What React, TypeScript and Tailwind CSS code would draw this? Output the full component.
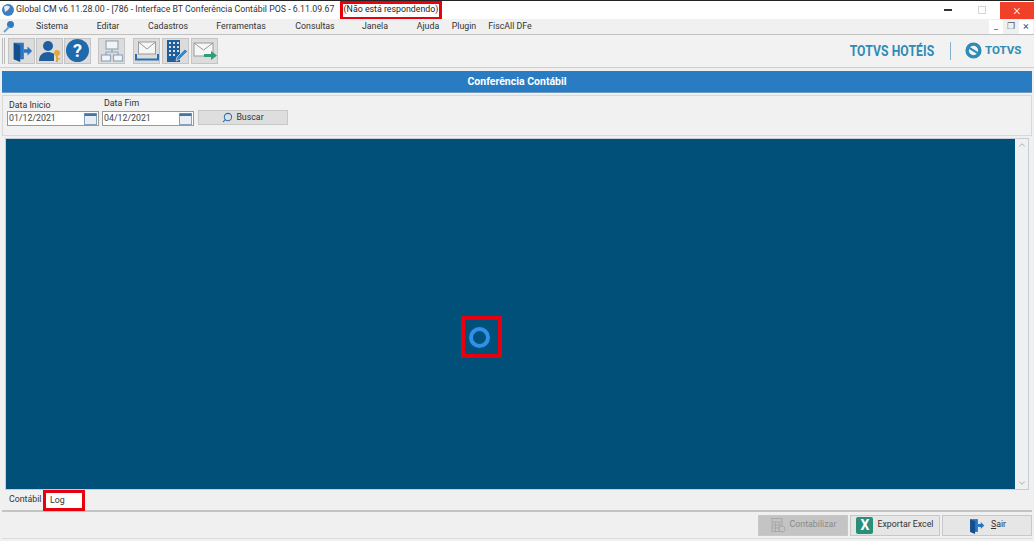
import { ChevronDown, ChevronUp, Search } from "lucide-react";
import type { ReactNode } from "react";

const font = "font-['Roboto','Open_Sans',sans-serif]";

const menus = [
  { label: "Sistema", width: "w-[60px]" },
  { label: "Editar", width: "w-[52px]" },
  { label: "Cadastros", width: "w-[68px]" },
  { label: "Ferramentas", width: "w-[78px]" },
  { label: "Consultas", width: "w-[70px]" },
  { label: "Janela", width: "w-[50px]" },
  { label: "Ajuda", width: "ml-[8px] w-[40px]" },
  { label: "Plugin", width: "w-[32px]" },
  { label: "FiscAll DFe", width: "w-[60px]" },
];

const ToolButton = ({ children, className = "" }: { children: ReactNode; className?: string }) => (
  <div className={`flex h-[26px] w-[27px] items-center justify-center border border-[#c4c4c4] bg-[#dcdcdc] ${className}`}>
    {children}
  </div>
);

const DoorIcon = ({ size = 22 }: { size?: number }) => (
  <svg width={size} height={size} viewBox="0 0 24 24">
    <path d="M3 3h11v18H3z" fill="#2a76c0" />
    <path d="M3 3l7 3v18l-7-3z" fill="#16508c" />
    <path d="M14 10h4V7l5 5-5 5v-3h-4z" fill="#2a76c0" />
  </svg>
);

const UserKeyIcon = () => (
  <svg width="24" height="24" viewBox="0 0 24 24">
    <circle cx="10" cy="7" r="5" fill="#1f5f9e" />
    <path d="M1 22c0-6 4-9 9-9 3 0 5 1 6 2v7z" fill="#1f5f9e" />
    <circle cx="19" cy="14" r="3" fill="#e3a83a" />
    <path d="M18 16h2v7h-2z" fill="#e3a83a" />
    <path d="M20 19h2v1.500h-2z" fill="#e3a83a" />
  </svg>
);

const HelpIcon = () => (
  <div className="flex h-[23px] w-[23px] items-center justify-center rounded-full bg-[#1f6aad] text-[18px] font-bold leading-none text-white">
    ?
  </div>
);

const NetworkIcon = () => (
  <svg width="24" height="24" viewBox="0 0 24 24" fill="#f4f4f4" stroke="#8fa8bf" strokeWidth="1.200">
    <rect x="6" y="2" width="12" height="8" />
    <rect x="1.500" y="16" width="9" height="6" />
    <rect x="13.500" y="16" width="9" height="6" />
    <path d="M12 10v3M6 16v-3h12v3" fill="none" />
  </svg>
);

const InboxIcon = () => (
  <svg width="24" height="24" viewBox="0 0 24 24">
    <rect x="3.500" y="3" width="17" height="12" fill="#f6f6f6" stroke="#9a9a9a" />
    <path d="M3.500 3l8.500 7 8.500-7" fill="none" stroke="#9a9a9a" />
    <path d="M1 15v5.500h22V15" fill="none" stroke="#2a6fb0" strokeWidth="2" />
  </svg>
);

const BuildingIcon = () => (
  <svg width="24" height="24" viewBox="0 0 24 24">
    <rect x="3" y="1" width="13" height="22" fill="#1f5f9e" />
    <path
      d="M5 3h2v2H5zM9 3h2v2H9zM13 3h2v2h-2zM5 7h2v2H5zM9 7h2v2H9zM13 7h2v2h-2zM5 11h2v2H5zM9 11h2v2H9zM13 11h2v2h-2zM5 15h2v2H5zM9 15h2v2H9z"
      fill="#dcdcdc"
    />
    <path d="M12 22l1-4 8-8 2.500 2.500-8 8z" fill="#3b86c6" stroke="#dcdcdc" strokeWidth="0.800" />
  </svg>
);

const MailArrowIcon = () => (
  <svg width="24" height="24" viewBox="0 0 24 24">
    <rect x="1" y="4" width="19" height="13" fill="#f6f6f6" stroke="#9a9a9a" />
    <path d="M1 4l9.500 7L20 4" fill="none" stroke="#9a9a9a" />
    <path d="M11 15h7v-3l6 4.500-6 4.500v-3h-7z" fill="#2f9b7a" />
  </svg>
);

const CalendarIcon = () => (
  <svg width="13" height="12" viewBox="0 0 13 12">
    <rect x="0.500" y="0.500" width="12" height="11" fill="#e8eef4" stroke="#8aa2b8" />
    <rect x="0.500" y="0.500" width="12" height="2.500" fill="#3f78a8" />
  </svg>
);

const DateField = ({ label, value, labelClass }: { label: string; value: string; labelClass: string }) => (
  <div className="flex flex-col">
    <span className={`text-[8.800px] leading-[11px] text-[#333] ${labelClass}`}>{label}</span>
    <div className="flex h-[15px] w-[92px] items-center justify-between border border-[#9a9a9a] bg-white pl-[1px] pr-[1px]">
      <span className="text-[8.800px] text-[#444]">{value}</span>
      <CalendarIcon />
    </div>
  </div>
);

const FooterButton = ({ children, disabled = false }: { children: ReactNode; disabled?: boolean }) => (
  <div
    className={`flex h-[21px] w-[90px] items-center justify-center gap-[4px] border border-[#c8c8c8] text-[8.800px] ${
      disabled ? "bg-[#c4c4c4] text-[#8a8a8a]" : "bg-[#e6e6e6] text-[#333]"
    }`}
  >
    {children}
  </div>
);

export default function App() {
  return (
    <div className={`flex h-[541px] w-[1034px] flex-col overflow-hidden bg-[#f0f0f0] ${font}`}>
      <div className="flex h-[19px] shrink-0 items-center border-t border-[#222] bg-white pl-[1px]">
        <svg width="14" height="14" viewBox="0 0 14 14" className="shrink-0">
          <circle cx="7" cy="7" r="6" fill="#3f7fc0" />
          <path d="M3 4c2-2 5-1 6 0L7 7 4 9z" fill="#e6eef6" />
        </svg>
        <span className="ml-[1px] w-[321px] shrink-0 whitespace-nowrap text-[8.800px] text-[#333]">
          Global CM v6.11.28.00 - [786 - Interface BT Conferência Contábil POS - 6.11.09.67
        </span>
        <div className="ml-[3px] flex h-[19px] w-[102px] shrink-0 items-center justify-center whitespace-nowrap border-[3px] border-[#e8000d] bg-white text-[8.800px] text-[#222]">
          (Não está respondendo)
        </div>
        <div className="ml-auto flex h-full items-center">
          <div className="mr-[26px] h-[1.500px] w-[8px] bg-[#333]" />
          <div className="mr-[14px] h-[8px] w-[8px] border border-[#d4d4d4]" />
          <div className="flex h-[17px] w-[34px] items-center justify-center bg-[#f0402a] text-[14px] font-light leading-none text-white">
            ×
          </div>
        </div>
      </div>

      <div className="flex h-[15px] shrink-0 items-center bg-[#f0f0f0]">
        <svg width="14" height="14" viewBox="0 0 14 14" className="ml-[2px] mr-[6px] shrink-0">
          <circle cx="8.500" cy="4.500" r="3.500" fill="#2a7cc0" />
          <path d="M7 7l-5 5" stroke="#6aa5d6" strokeWidth="2" />
        </svg>
        {menus.map((m) => (
          <span key={m.label} className={`${m.width} shrink-0 whitespace-nowrap text-center text-[8.800px] text-[#333]`}>
            {m.label}
          </span>
        ))}
        <div className="ml-auto flex items-center gap-[1px] pr-[1px]">
          <div className="flex h-[14px] w-[14px] items-center justify-center bg-white text-[9px] leading-none text-[#555]">_</div>
          <div className="flex h-[14px] w-[14px] items-center justify-center text-[9px] leading-none text-[#555]">❐</div>
          <div className="flex h-[14px] w-[14px] items-center justify-center bg-white text-[11px] leading-none text-[#555]">×</div>
        </div>
      </div>

      <div className="flex h-[33px] shrink-0 items-center border-t border-[#c0c0c0] bg-[#f2f2f2] pb-[1px] pl-[2px] pr-[13px]">
        <div className="mr-[3px] h-[26px] w-[3px] border-x border-[#bbb]" />
        <ToolButton><DoorIcon /></ToolButton>
        <ToolButton className="ml-[1px]"><UserKeyIcon /></ToolButton>
        <ToolButton className="ml-[1px]"><HelpIcon /></ToolButton>
        <ToolButton className="ml-[7px]"><NetworkIcon /></ToolButton>
        <ToolButton className="ml-[8px]"><InboxIcon /></ToolButton>
        <ToolButton className="ml-[2px] w-[25px]"><BuildingIcon /></ToolButton>
        <ToolButton className="ml-[2px]"><MailArrowIcon /></ToolButton>
        <div className="ml-auto flex items-center">
          <span className="origin-right scale-x-[0.87] text-[14px] font-bold leading-none tracking-[0.1px] text-[#2e8bb5]">TOTVS HOTÉIS</span>
          <div className="ml-[16px] mr-[14px] h-[18px] w-px bg-[#7fb2cc]" />
          <svg width="17" height="17" viewBox="0 0 16 16" className="mr-[3px]">
            <circle cx="8" cy="8" r="6" fill="none" stroke="#2e8bb5" strokeWidth="3.200" />
            <path d="M4 5.500l8 5" stroke="#2e8bb5" strokeWidth="2" />
          </svg>
          <span className="w-[36px] whitespace-nowrap text-[11.500px] font-bold leading-none text-[#2e8bb5]">TOTVS</span>
        </div>
      </div>

      <div className="flex min-h-0 flex-1 flex-col border-t border-[#cfcfcf] px-[2px] pt-[3px]">
        <div className="flex h-[22px] shrink-0 items-center justify-center border-b border-[#6f9cc0] bg-[#2a7cc2] text-[10.500px] font-bold text-white">
          Conferência Contábil
        </div>

        <div className="mt-[2px] flex h-[41px] shrink-0 items-start border border-[#d8d8d8] bg-[#f1f1f1] pl-[4px] pt-[2px]">
          <DateField label="Data Inicio" value="01/12/2021" labelClass="pt-[2px] pl-[2px]" />
          <div className="ml-[3px]">
            <DateField label="Data Fim" value="04/12/2021" labelClass="pb-[2px] pl-[2px]" />
          </div>
          <div className="ml-[4px] mt-[12px] flex h-[15px] w-[90px] items-center justify-center gap-[3px] border border-[#c8c8c8] bg-[#dedede] text-[8.800px] text-[#333]">
            <Search size={11} strokeWidth={2.200} className="-scale-x-100 text-[#2a6fb0]" />
            Buscar
          </div>
        </div>

        <div className="ml-[3px] mr-[3px] mt-[2px] flex min-h-0 flex-1 border border-[#c4ced6]">
          <div className="relative flex-1 bg-[#00507a]">
            <div className="absolute left-[455px] top-[177px] flex h-[42px] w-[41px] items-center justify-center border-[4px] border-[#e8000d] pr-[4px]">
              <div className="h-[21px] w-[21px] shrink-0 rounded-full border-[4px] border-[#2f90e8]" />
            </div>
          </div>
          <div className="flex w-[13px] shrink-0 flex-col items-center justify-between bg-[#f0f0f0] py-[1px] text-[#a0a0a0]">
            <ChevronUp size={10} />
            <ChevronDown size={10} />
          </div>
        </div>

        <div className="flex h-[22px] shrink-0 items-start border-b-2 border-[#c4c4c4]">
          <span className="ml-[7px] mt-[3px] w-[34px] whitespace-nowrap text-[8.800px] text-[#333]">Contábil</span>
          <div className="flex h-[21px] w-[42px] items-center border-[3px] border-[#e8000d] bg-white pl-[4px] text-[8.800px] text-[#333]">
            Log
          </div>
        </div>

        <div className="mb-[2px] flex h-[27px] shrink-0 items-center justify-end gap-[2px] border-b border-[#dcdcdc]">
          <FooterButton disabled>
            <svg width="16" height="16" viewBox="0 0 16 16" fill="none" stroke="#a8a8a8">
              <rect x="2" y="1.500" width="10" height="13" />
              <path d="M2 5h10M2 8h10M2 11h10M5.500 5v9.500M9 5v9.500" />
              <circle cx="12" cy="12" r="3" fill="#c4c4c4" />
            </svg>
            Contabilizar
          </FooterButton>
          <FooterButton>
            <div className="flex h-[17px] w-[17px] items-center justify-center rounded-[2px] bg-[#2a8f7a] text-[14px] font-bold leading-none text-white">
              X
            </div>
            Exportar Excel
          </FooterButton>
          <FooterButton>
            <DoorIcon size={17} />
            <span className="ml-[2px]"><span className="underline">S</span>air</span>
          </FooterButton>
        </div>
      </div>
    </div>
  );
}
